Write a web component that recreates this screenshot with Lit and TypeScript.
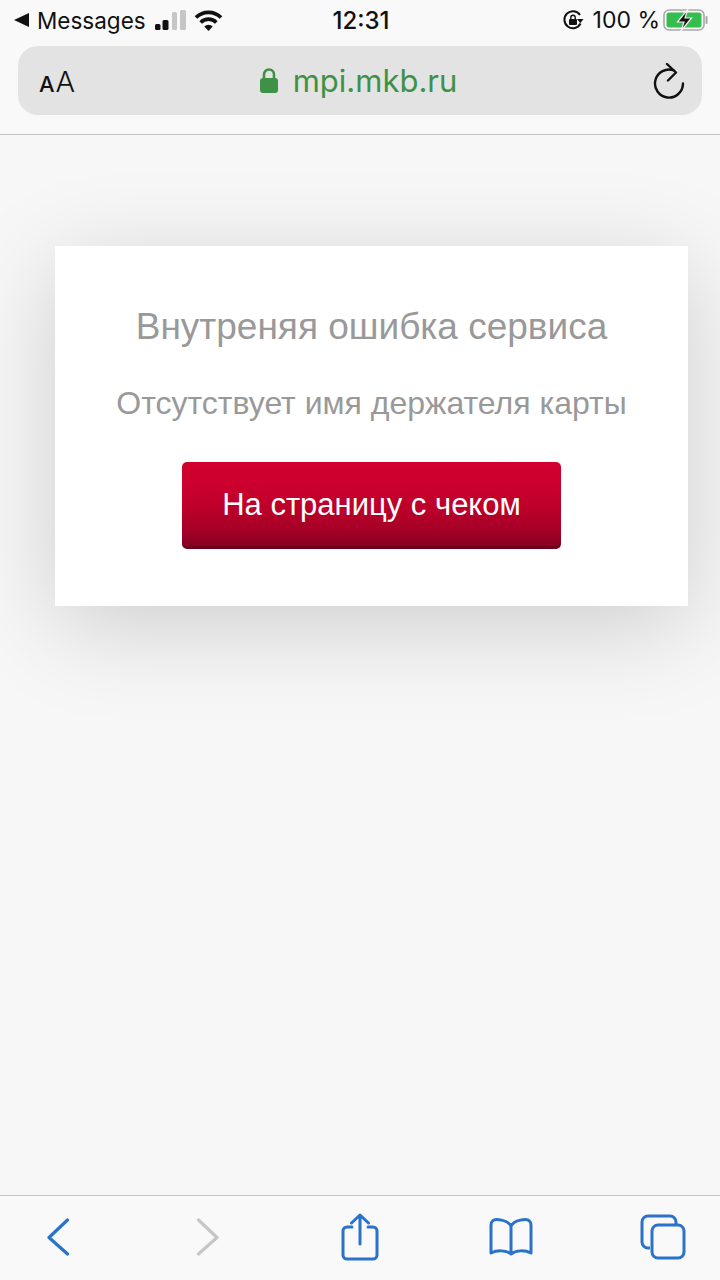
import { LitElement, html, css } from "lit";
import { customElement } from "lit/decorators.js";

@customElement("app-root")
export class AppRoot extends LitElement {
  static styles = css`
    :host { display: block; width: 720px; height: 1280px; overflow: hidden; background: #f7f7f7; font-family: "Liberation Sans", Arial, sans-serif; }
    .page { display: flex; flex-direction: column; width: 720px; height: 1280px; }
    .top { height: 135px; box-sizing: border-box; flex: none; background: #f9f9f9; border-bottom: 1px solid #c4c4c4; padding: 0 18px; display: flex; flex-direction: column; }
    .status { height: 46px; flex: none; margin: 0 -6px 0 -4px; display: grid; grid-template-columns: 1fr auto 1fr; align-items: center; font-family: Inter, "Liberation Sans", sans-serif; color: #111; font-size: 22.5px; padding-bottom: 6px; box-sizing: border-box; }
    .s-left { display: flex; align-items: center; }
    .s-left .msg { margin-left: 8px; }
    .s-left .sig { margin-left: 9px; }
    .s-left .wifi { margin-left: 8px; }
    .time { font-weight: 500; font-size: 24px; }
    .s-right { display: flex; align-items: center; justify-content: flex-end; }
    .s-right .pct { margin-left: 9px; margin-right: 3px; font-size: 23px; }
    .url { height: 69px; flex: none; box-sizing: border-box; background: #e3e3e3; border-radius: 20px; display: grid; grid-template-columns: 1fr auto 1fr; align-items: center; padding: 0 17px 0 21px; }
    .aa { color: #111; font-family: Inter, "Liberation Sans", sans-serif; line-height: 1; display: flex; align-items: baseline; padding-top: 2px; }
    .aa .sm { font-size: 22px; font-weight: 500; }
    .aa .lg { font-size: 29px; margin-left: 1px; font-weight: 300; }
    .addr { display: flex; align-items: center; gap: 15px; margin-right: 7px; color: #3f9146; font-family: Inter, "Liberation Sans", sans-serif; font-size: 31px; }
    .reload { justify-self: end; display: flex; }
    .main { flex: 1; display: flex; flex-direction: column; padding: 111px 32px 0 55px; }
    .card { height: 360px; box-sizing: border-box; background: #fff; box-shadow: 0 20px 90px rgba(0,0,0,0.17); display: flex; flex-direction: column; align-items: center; padding-top: 59px; color: #999; }
    .title { font-size: 37px; line-height: 44px; }
    .sub { font-size: 32px; line-height: 40px; margin-top: 34px; }
    .btn { margin-top: 39px; width: 379px; height: 87px; border-radius: 5px; background: linear-gradient(#d1002f 0%, #cc002e 25%, #bb002a 55%, #a30027 80%, #8a0022 94%, #66001a 100%); color: #fff; font-size: 31px; display: flex; align-items: center; justify-content: center; padding-bottom: 2px; box-sizing: border-box; }
    .bottom { height: 85px; flex: none; box-sizing: border-box; background: #f9f9f9; border-top: 1px solid #c4c4c4; display: grid; grid-template-columns: 150px 145px 148px 151px auto; padding-left: 46px; align-items: center; }
    .bottom .bi { display: flex; justify-content: flex-start; padding-bottom: 2px; }
    svg { display: block; }
  `;

  render() {
    return html`<div class="page">
      <div class="top">
        <div class="status">
          <div class="s-left">
            <svg width="15" height="15" viewBox="0 0 15 15"><path d="M15 0V14L0 7Z" fill="#111"/></svg>
            <span class="msg">Messages</span>
            <svg class="sig" width="31" height="22" viewBox="0 0 31 22"><rect x="0" y="15" width="5.500" height="6" rx="1.500" fill="#111"/><rect x="7.500" y="11" width="6" height="10" rx="1.500" fill="#111"/><rect x="17" y="3" width="5" height="18" rx="1.500" fill="#c6c6c6"/><rect x="25" y="1" width="6" height="20" rx="1.500" fill="#c6c6c6"/></svg>
            <svg class="wifi" width="29" height="22" viewBox="0 0 29 22"><path d="M14.500 22 10.300 17.400a6 6 0 0 1 8.400 0Z" fill="#111"/><path d="M6.700 13.400a11 11 0 0 1 15.600 0" fill="none" stroke="#111" stroke-width="3.600"/><path d="M2 8.500a18 18 0 0 1 25 0" fill="none" stroke="#111" stroke-width="3.800"/></svg>
          </div>
          <div class="time">12:31</div>
          <div class="s-right">
            <svg width="22" height="22" viewBox="0 0 22 22"><path d="M18.500 14.500A8.500 8.500 0 1 1 18 6" fill="none" stroke="#111" stroke-width="2"/><path d="M15 10h6.500l-3.200 4.200Z" fill="#111"/><rect x="7" y="10" width="8" height="6" rx="1" fill="#111"/><path d="M8.800 10V8.500a2.200 2.200 0 0 1 4.400 0V10" fill="none" stroke="#111" stroke-width="1.400"/></svg>
            <span class="pct">100 %</span>
            <svg width="45" height="24" viewBox="0 0 45 24"><rect x="1" y="2" width="40" height="20" rx="5" fill="none" stroke="#a9a9a9" stroke-width="1.600"/><rect x="3.500" y="4.500" width="35" height="15" rx="2.500" fill="#36bd50"/><path d="M43.500 9v6" stroke="#a9a9a9" stroke-width="2" stroke-linecap="round"/><path d="M25 1 14.500 14H21L18 23 28.500 10H22Z" fill="#111" stroke="#f3f3f3" stroke-width="1.200"/></svg>
          </div>
        </div>
        <div class="url">
          <div class="aa"><span class="sm">A</span><span class="lg">A</span></div>
          <div class="addr">
            <svg width="18" height="25" viewBox="0 0 18 25"><path d="M4 11V6.500a5 5 0 0 1 10 0V11" fill="none" stroke="#3f9146" stroke-width="2.600"/><rect x="0" y="10" width="18" height="15" rx="3" fill="#3f9146"/></svg>
            <span>mpi.mkb.ru</span>
          </div>
          <div class="reload">
            <svg width="32" height="36" viewBox="0 0 32 36"><path d="M21 7.500A14 14 0 1 0 30 20.500" fill="none" stroke="#111" stroke-width="2.400" stroke-linecap="round"/><path d="M14 1 23 9.500 15 17.500" fill="none" stroke="#111" stroke-width="2.400" stroke-linecap="round" stroke-linejoin="round"/></svg>
          </div>
        </div>
      </div>
      <div class="main">
        <div class="card">
          <div class="title">Внутреняя ошибка сервиса</div>
          <div class="sub">Отсутствует имя держателя карты</div>
          <div class="btn">На страницу с чеком</div>
        </div>
      </div>
      <div class="bottom">
        <div class="bi"><svg width="24" height="38" viewBox="0 0 24 38"><path d="M21.500 2 3 19.500 21.500 36" fill="none" stroke="#2a73c8" stroke-width="3.200" stroke-linecap="round" stroke-linejoin="round"/></svg></div>
        <div class="bi"><svg width="24" height="38" viewBox="0 0 24 38"><path d="M2.500 2 21 19.500 2.500 36" fill="none" stroke="#c6c6c6" stroke-width="3.200" stroke-linecap="round" stroke-linejoin="round"/></svg></div>
        <div class="bi"><svg width="38" height="48" viewBox="0 0 38 48"><path d="M11 14H6a4 4 0 0 0-4 4v24a4 4 0 0 0 4 4h26a4 4 0 0 0 4-4V18a4 4 0 0 0-4-4h-5" fill="none" stroke="#2a73c8" stroke-width="3" stroke-linecap="round"/><path d="M19 31V2M10.500 10 19 2l8.500 8" fill="none" stroke="#2a73c8" stroke-width="3" stroke-linecap="round" stroke-linejoin="round"/></svg></div>
        <div class="bi"><svg width="44" height="38" viewBox="0 0 44 38"><path d="M22 8C19 2 6 0 3.500 3 2.500 4 2 5 2 7v28c6-3 15-3 20 1 5-4 14-4 20-1V7c0-2-.5-3-1.500-4C38 0 25 2 22 8ZM22 8v28" fill="none" stroke="#2a73c8" stroke-width="3" stroke-linejoin="round" stroke-linecap="round"/></svg></div>
        <div class="bi"><svg width="46" height="46" viewBox="0 0 46 46"><path d="M10 34H8a6 6 0 0 1-6-6V8a6 6 0 0 1 6-6h22a6 6 0 0 1 6 6v2" fill="none" stroke="#2a73c8" stroke-width="3"/><rect x="12" y="11" width="32" height="33" rx="6" fill="none" stroke="#2a73c8" stroke-width="3"/></svg></div>
      </div>
    </div>`;
  }
}
